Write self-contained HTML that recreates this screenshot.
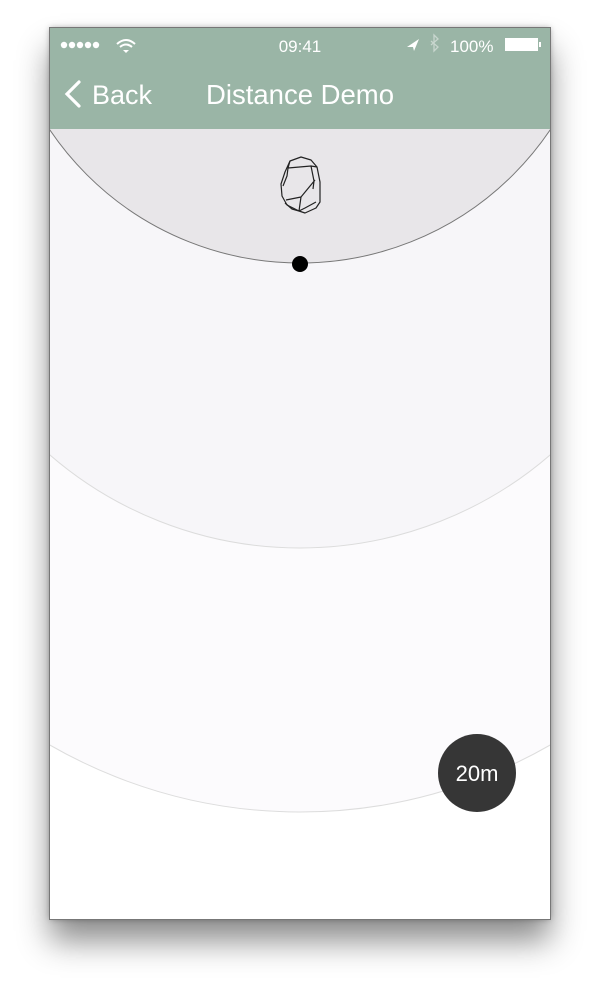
<!DOCTYPE html>
<html><head><style>
html,body{margin:0;padding:0;background:#fff;width:600px;height:990px;overflow:hidden}
#ph{position:absolute;left:50px;top:28px;width:500px;height:891px;background:#fff;box-shadow:0 22px 30px rgba(0,0,0,.45),0 0 6px rgba(0,0,0,.35);outline:1px solid #777;overflow:hidden}
svg{position:absolute;left:0;top:0}
.t{font-family:"Liberation Sans",sans-serif;fill:#fff}
</style></head><body>
<div id="ph">
<svg width="500" height="891" viewBox="50 28 500 891">
<circle cx="300" cy="312" r="500" fill="#fcfbfd" stroke="#ddd" stroke-width="1"/>
<circle cx="300" cy="165.5" r="382.5" fill="#f7f6f9" stroke="#dcdcdc" stroke-width="1"/>
<circle cx="300" cy="-38.5" r="301.5" fill="#e8e6e9" stroke="#777" stroke-width="1"/>
<g fill="none" stroke="#222" stroke-width="1.2" stroke-linejoin="round">
<path d="M290 161 L301 157 L311 160 L317 167 L320 182 L320 202 L316 208 L305 213 L299 211 L287 205 L282 196 L281 184 L285 172 Z"/>
<path d="M290 161 L288 168 L311 166 L317 167 M288 168 L287 176 L283 186 M311 166 L314 181 L313 189 M315 180 L301 197 L299 211 M301 197 L286 200 M316 202 L305 208 L299 211 M285 203 L292 209 L299 211"/>
</g>
<circle cx="300" cy="264" r="8" fill="#000"/>
<circle cx="477" cy="773" r="39" fill="#363636"/>
<text class="t" x="477" y="781" font-size="22" text-anchor="middle">20m</text>
<rect x="50" y="28" width="500" height="101" fill="#9ab5a6"/>
<g fill="#fff"><circle cx="64" cy="45" r="3.2"/><circle cx="72" cy="45" r="3.2"/><circle cx="80" cy="45" r="3.2"/><circle cx="88" cy="45" r="3.2"/><circle cx="96" cy="45" r="3.2"/></g>
<path d="M117 44 Q126 36 135 44 M120 47 Q126 42 132 47" stroke="#fff" stroke-width="2" fill="none"/>
<path d="M123 50 L126 53 L129 50 Z" fill="#fff"/>
<text class="t" x="300" y="52" font-size="17" text-anchor="middle">09:41</text>
<path d="M407 47 L419 39 L414 51 L413 47 Z" fill="#fff"/>
<path d="M431 41 L438 47 L434 51 L434 35 L438 39 L431 45" stroke="#c8d6ce" stroke-width="1.3" fill="none"/>
<text class="t" x="450" y="52" font-size="17">100%</text>
<rect x="505" y="38" width="33" height="13" fill="#fff"/>
<rect x="539" y="42" width="2" height="5" fill="#fff"/>
<path d="M79 82 L67 94 L79 106" stroke="#fff" stroke-width="3.2" fill="none" stroke-linecap="round"/>
<text class="t" x="92" y="104" font-size="27">Back</text>
<text class="t" x="300" y="104" font-size="27.5" text-anchor="middle">Distance Demo</text>
</svg>
</div>
</body></html>
